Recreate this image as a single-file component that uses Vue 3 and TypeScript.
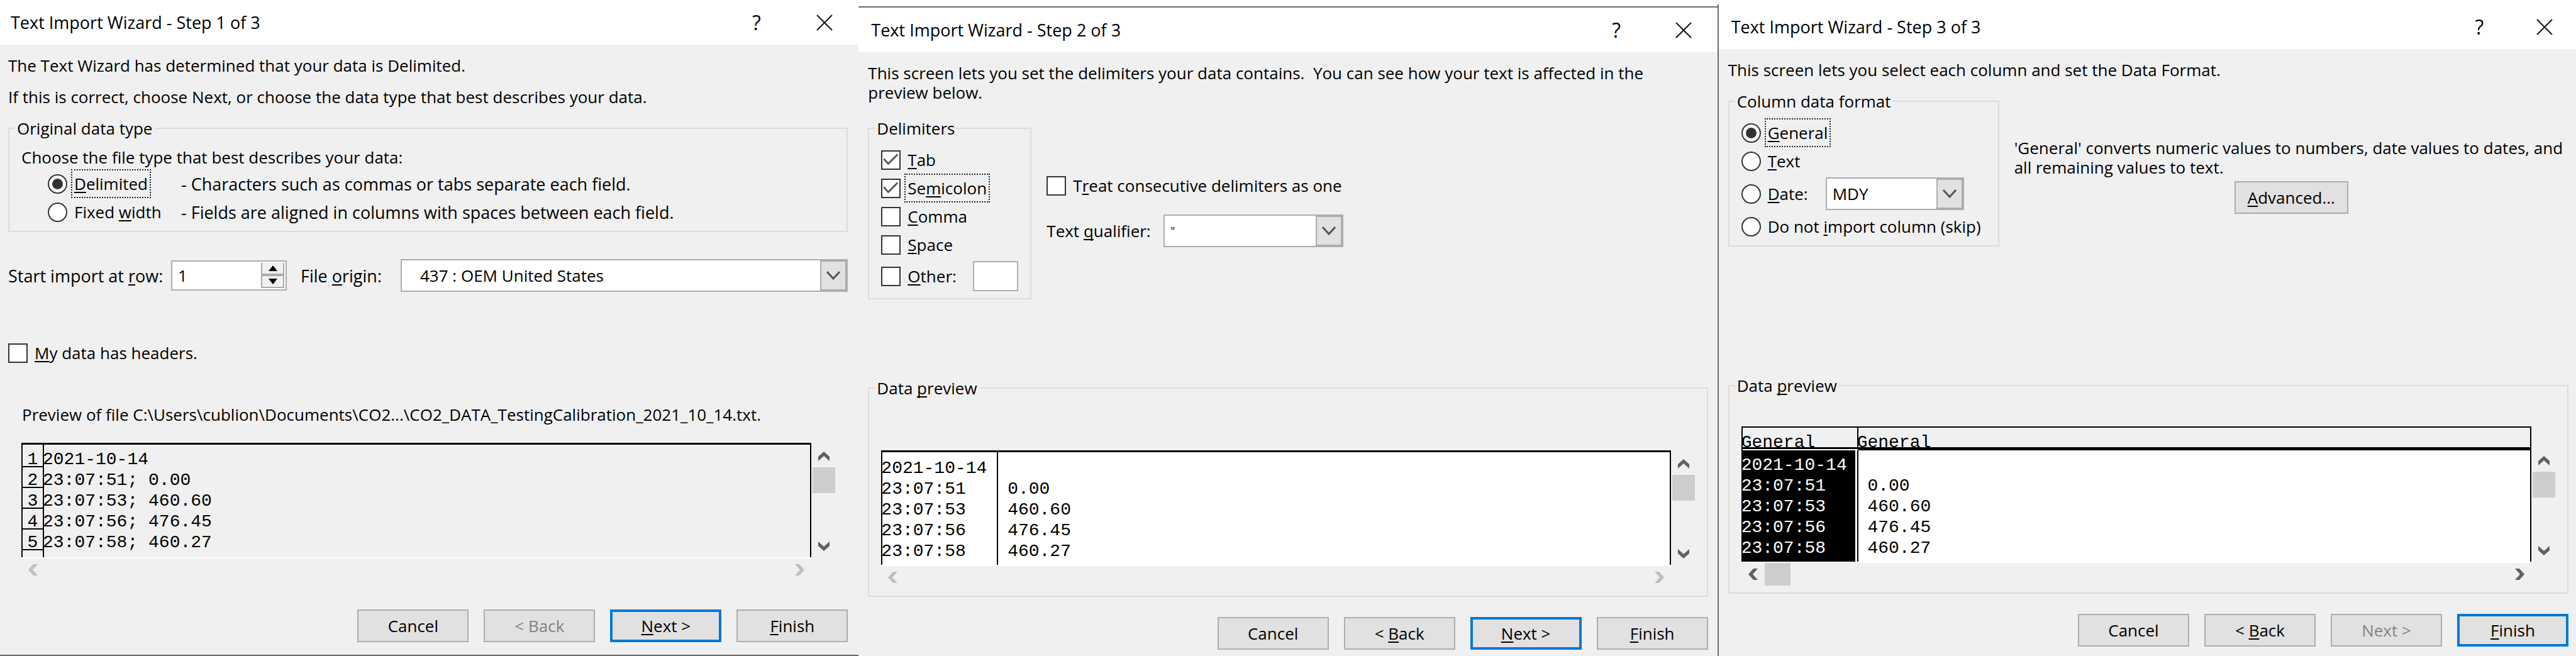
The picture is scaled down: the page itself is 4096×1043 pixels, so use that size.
<script setup lang="ts">
import { h, ref, type FunctionalComponent } from 'vue'

/* Text with an access key: the letter after "&" is underlined. */
const Caption: FunctionalComponent<{ text: string }> = ({ text }) => {
  const at = text.indexOf('&')
  if (at < 0) return h('span', { class: 'caption' }, text)
  return h('span', { class: 'caption' }, [text.slice(0, at), h('u', text[at + 1]), text.slice(at + 2)])
}
Caption.props = ['text']

interface Action {
  text: string
  primary?: boolean
  disabled?: boolean
}

const fileType = ref('delimited')
const startRow = ref('1')
const fileOrigin = ref('437')
const hasHeaders = ref(false)

const fileTypes = [
  { id: 'delimited', text: '&Delimited', note: '- Characters such as commas or tabs separate each field.' },
  { id: 'fixed', text: 'Fixed &width', note: '- Fields are aligned in columns with spaces between each field.' },
]

const delimiters = ref([
  { id: 'tab', text: '&Tab', on: true },
  { id: 'semicolon', text: 'Se&micolon', on: true },
  { id: 'comma', text: '&Comma', on: false },
  { id: 'space', text: '&Space', on: false },
])
const otherOn = ref(false)
const otherChar = ref('')
const mergeDelimiters = ref(false)
const qualifier = ref('"')

const columnFormat = ref('general')
const dateOrder = ref('MDY')

const lines = ['2021-10-14', '23:07:51; 0.00', '23:07:53; 460.60', '23:07:56; 476.45', '23:07:58; 460.27']
const rows = lines.map((line) => {
  const [time, value = ''] = line.split(';')
  return { time, value }
})

const actions: Record<number, Action[]> = {
  1: [{ text: 'Cancel' }, { text: '< Back', disabled: true }, { text: '&Next >', primary: true }, { text: '&Finish' }],
  2: [{ text: 'Cancel' }, { text: '< &Back' }, { text: '&Next >', primary: true }, { text: '&Finish' }],
  3: [{ text: 'Cancel' }, { text: '< &Back' }, { text: 'Next >', disabled: true }, { text: '&Finish', primary: true }],
}

/* Scroll bar arrow outlines. */
const up = '0,8 9,0 18,8 18,15 9,7 0,15'
const down = '0,0 9,8 18,0 18,7 9,15 0,7'
const left = '8,0 0,9 8,18 15,18 7,9 15,0'
const right = '0,0 8,9 0,18 7,18 15,9 7,0'
</script>

<template>
  <main class="desk">
    <section v-for="step in 3" :key="step" class="dialog" :class="`step-${step}`">
      <header class="titlebar">
        <h1>Text Import Wizard - Step {{ step }} of 3</h1>
        <button type="button" class="help" aria-label="Help">?</button>
        <button type="button" class="close" aria-label="Close">
          <svg width="26" height="26" viewBox="0 0 26 26"><path d="M1 1L25 25M25 1L1 25" fill="none" stroke="#111" stroke-width="2" /></svg>
        </button>
      </header>

      <div class="body">
        <template v-if="step === 1">
          <p>The Text Wizard has determined that your data is Delimited.</p>
          <p class="second">If this is correct, choose Next, or choose the data type that best describes your data.</p>

          <fieldset class="group">
            <legend>Original data type</legend>
            <div class="options">
              <p>Choose the file type that best describes your data:</p>
              <label v-for="t in fileTypes" :key="t.id" class="option indented">
                <input v-model="fileType" type="radio" name="file-type" :value="t.id" />
                <span class="name wide"><Caption :text="t.text" :class="{ focus: fileType === t.id }" /></span>
                <span class="note">{{ t.note }}</span>
              </label>
            </div>
          </fieldset>

          <div class="import-row">
            <label for="start-row"><Caption text="Start import at &row:" /></label>
            <div class="spin">
              <input id="start-row" v-model="startRow" type="text" />
              <span class="spin-buttons">
                <button type="button" aria-label="Increase"><svg width="14" height="9" viewBox="0 0 14 9"><path d="M0 9L7 0L14 9Z" /></svg></button>
                <button type="button" aria-label="Decrease"><svg width="14" height="9" viewBox="0 0 14 9"><path d="M0 0L7 9L14 0Z" /></svg></button>
              </span>
            </div>
            <label for="origin" class="origin-label"><Caption text="File &origin:" /></label>
            <div class="combo origin">
              <select id="origin" v-model="fileOrigin"><option value="437">437 : OEM United States</option></select>
              <span class="drop"><svg width="22" height="14" viewBox="0 0 22 14"><path d="M1 1L11 12L21 1" /></svg></span>
            </div>
          </div>

          <label class="option headers">
            <input v-model="hasHeaders" type="checkbox" />
            <span class="name"><Caption text="&My data has headers." /></span>
          </label>

          <p class="file-name">Preview of file C:\Users\cublion\Documents\CO2...\CO2_DATA_TestingCalibration_2021_10_14.txt.</p>
        </template>

        <template v-else-if="step === 2">
          <p>
            This screen lets you set the delimiters your data contains.&nbsp; You can see how your text is affected in the<br />
            preview below.
          </p>
          <div class="columns">
            <fieldset class="group delimiters">
              <legend>Delimiters</legend>
              <div class="options">
                <label v-for="d in delimiters" :key="d.id" class="option">
                  <input v-model="d.on" type="checkbox" />
                  <span class="name"><Caption :text="d.text" :class="{ focus: d.id === 'semicolon' }" /></span>
                </label>
                <div class="option">
                  <input id="other" v-model="otherOn" type="checkbox" />
                  <label for="other" class="name other-label"><Caption text="&Other:" /></label>
                  <input v-model="otherChar" type="text" class="other-char" aria-label="Other delimiter" />
                </div>
              </div>
            </fieldset>
            <div class="qualifiers">
              <label class="option">
                <input v-model="mergeDelimiters" type="checkbox" />
                <span class="name"><Caption text="T&reat consecutive delimiters as one" /></span>
              </label>
              <div class="qualifier-row">
                <label for="qualifier"><Caption text="Text &qualifier:" /></label>
                <div class="combo qualifier">
                  <select id="qualifier" v-model="qualifier"><option>"</option></select>
                  <span class="drop"><svg width="22" height="14" viewBox="0 0 22 14"><path d="M1 1L11 12L21 1" /></svg></span>
                </div>
              </div>
            </div>
          </div>
        </template>

        <template v-else>
          <p>This screen lets you select each column and set the Data Format.</p>
          <div class="columns">
            <fieldset class="group formats">
              <legend>Column data format</legend>
              <div class="options">
                <label class="option">
                  <input v-model="columnFormat" type="radio" name="format" value="general" />
                  <span class="name"><Caption text="&General" :class="{ focus: columnFormat === 'general' }" /></span>
                </label>
                <label class="option">
                  <input v-model="columnFormat" type="radio" name="format" value="text" />
                  <span class="name"><Caption text="&Text" /></span>
                </label>
                <div class="option">
                  <input id="date" v-model="columnFormat" type="radio" name="format" value="date" />
                  <label for="date" class="name date-label"><Caption text="&Date:" /></label>
                  <div class="combo date">
                    <select v-model="dateOrder" aria-label="Date order"><option>MDY</option></select>
                    <span class="drop"><svg width="22" height="14" viewBox="0 0 22 14"><path d="M1 1L11 12L21 1" /></svg></span>
                  </div>
                </div>
                <label class="option">
                  <input v-model="columnFormat" type="radio" name="format" value="skip" />
                  <span class="name"><Caption text="Do not &import column (skip)" /></span>
                </label>
              </div>
            </fieldset>
            <div class="explain">
              <p>
                'General' converts numeric values to numbers, date values to dates, and<br />
                all remaining values to text.
              </p>
              <button type="button" class="push advanced"><Caption text="&Advanced..." /></button>
            </div>
          </div>
        </template>

        <component :is="step === 1 ? 'div' : 'fieldset'" class="preview-group" :class="{ group: step > 1 }">
          <legend v-if="step > 1"><Caption text="Data &preview" /></legend>
          <div class="preview">
            <table>
              <thead v-if="step === 3">
                <tr><th class="first">General</th><th>General</th></tr>
              </thead>
              <tbody>
                <tr v-for="(row, i) in rows" :key="i">
                  <td class="first">{{ step === 1 ? i + 1 : row.time }}</td>
                  <td>{{ step === 1 ? lines[i] : row.value }}</td>
                </tr>
                <tr class="rest"><td class="first"></td><td></td></tr>
              </tbody>
            </table>
            <div class="vbar">
              <button type="button" aria-label="Scroll up"><svg width="18" height="15"><polygon :points="up" /></svg></button>
              <span class="thumb"></span>
              <button type="button" class="end" aria-label="Scroll down"><svg width="18" height="15"><polygon :points="down" /></svg></button>
            </div>
            <div class="hbar">
              <button type="button" :disabled="step < 3" aria-label="Scroll left"><svg width="15" height="18"><polygon :points="left" /></svg></button>
              <span v-if="step === 3" class="thumb"></span>
              <button type="button" class="end" :disabled="step < 3" aria-label="Scroll right"><svg width="15" height="18"><polygon :points="right" /></svg></button>
            </div>
          </div>
        </component>

        <footer>
          <button v-for="a in actions[step]" :key="a.text" type="button" class="push" :class="{ primary: a.primary }" :disabled="a.disabled">
            <Caption :text="a.text" />
          </button>
        </footer>
      </div>
    </section>
  </main>
</template>

<style>
body {
  margin: 0;
  background: #fff;
}

.caption {
  white-space: pre;
}

.caption u {
  text-decoration-thickness: 2px;
  text-underline-offset: 3px;
  text-decoration-skip-ink: none;
}

.caption.focus {
  outline: 2px dotted #222;
  outline-offset: 3px;
}
</style>

<style scoped>
.desk,
.desk * {
  box-sizing: border-box;
}

.desk {
  display: grid;
  grid-template-columns: repeat(3, minmax(0, 1fr));
  min-height: 100vh;
  color: #000;
  font: 26px/31px 'Open Sans', 'Noto Sans', sans-serif;
}

button,
input,
select {
  margin: 0;
  padding: 0;
  border: 0;
  color: inherit;
  font: inherit;
}

p {
  margin: 0;
}

/* Dialogs */
.dialog {
  display: flex;
  flex-direction: column;
  background: #f0f0f0;
}

.step-1 {
  --left: 13px;
  --right: 17px;
  --close: 109px;
  --title-left: 17px;
  --preview-gap: 29px;
  border-bottom: 2px solid #6b6b6b;
}

.step-2 {
  --left: 15px;
  --right: 15px;
  --close: 107px;
  --title-left: 20px;
  --preview-gap: 125px;
  margin-top: 10px;
  border-top: 2px solid #6b6b6b;
}

.step-3 {
  --left: 15px;
  --right: 12px;
  --close: 100px;
  --title-left: 20px;
  --preview-gap: 205px;
  margin-top: 7px;
  border-left: 2px solid #6b6b6b;
}

.titlebar {
  display: flex;
  align-items: center;
  height: 71px;
  padding-left: var(--title-left);
  background: #fff;
}

.titlebar h1 {
  flex: 1;
  margin: 0;
  font-size: 27px;
  font-weight: 400;
}

.titlebar button {
  display: flex;
  align-items: center;
  justify-content: center;
  width: 107px;
  height: 71px;
  background: none;
}

.titlebar .help {
  font-size: 32px;
}

.titlebar .close {
  width: var(--close);
}

.body {
  flex: 1;
  padding: 18px var(--right) 0 var(--left);
}

.second {
  margin-top: 19px;
}

/* Group boxes */
.group {
  min-width: 0;
  margin: 18px 0 0;
  padding: 15px 11px 11px 9px;
  border: 2px solid #dcdcdc;
}

.group legend {
  padding: 0 3px;
  line-height: 32px;
}

.columns {
  display: flex;
  gap: 24px;
  margin-top: 18px;
}

.step-2 .columns {
  margin-top: 25px;
}

.columns .group {
  flex: none;
  margin: 0;
}

.delimiters {
  width: 260px;
}

.formats {
  width: 431px;
}

.options {
  display: flex;
  flex-direction: column;
  gap: 7px;
  padding: 0 8px 0 10px;
}

.option {
  display: flex;
  align-items: center;
  gap: 6px;
  min-height: 38px;
  white-space: nowrap;
}

.indented {
  padding-left: 42px;
}

.name {
  padding-left: 5px;
}

.wide {
  width: 169px;
}

.note {
  font-size: 27px;
}

.other-label {
  width: 105px;
}

.date-label {
  width: 91px;
}

input[type='checkbox'],
input[type='radio'] {
  flex: none;
  width: 31px;
  height: 31px;
  border: 2px solid #333;
  background: #fff;
  appearance: none;
}

input[type='radio'] {
  display: grid;
  place-content: center;
  border-radius: 50%;
}

input[type='radio']:checked::before {
  width: 17px;
  height: 17px;
  border-radius: 50%;
  background: #333;
  content: '';
}

input[type='checkbox']:checked::before {
  display: block;
  width: 27px;
  height: 27px;
  background: #555;
  clip-path: polygon(1px 13px, 3px 11px, 9px 18px, 23px 4px, 25px 6px, 9px 22px);
  content: '';
}

.other-char {
  width: 72px;
  height: 48px;
  border: 2px solid #abadb3;
  background: #fff;
}

/* Combo boxes and the row spinner */
.combo {
  position: relative;
  height: 52px;
}

.combo select {
  width: 100%;
  height: 100%;
  padding: 0 46px 0 9px;
  border: 2px solid #abadb3;
  border-radius: 0;
  background: #fff;
  appearance: none;
}

.combo .drop {
  position: absolute;
  top: 0;
  right: 0;
  bottom: 0;
  display: flex;
  align-items: center;
  justify-content: center;
  width: 44px;
  border: solid #abadb0;
  border-width: 4px 4px 4px 2px;
  background: #e1e1e1;
  pointer-events: none;
}

.drop path {
  fill: none;
  stroke: #555;
  stroke-width: 3;
}

.origin {
  flex: 1;
}

.origin select {
  padding-left: 29px;
}

.qualifier {
  width: 286px;
}

.qualifier select {
  font-size: 18px;
}

.date {
  width: 220px;
}

.import-row {
  display: flex;
  align-items: center;
  margin-top: 43px;
}

.import-row > label {
  width: 259px;
  font-size: 27px;
}

.import-row > .origin-label {
  width: 181px;
  padding-left: 22px;
}

.spin {
  display: flex;
  width: 184px;
  height: 48px;
  padding: 2px;
  border: 2px solid #abadb3;
  background: #fff;
}

.spin input {
  flex: 1;
  min-width: 0;
  padding-left: 7px;
  background: none;
}

.spin-buttons {
  display: flex;
  flex-direction: column;
  gap: 4px;
  width: 37px;
  border: 2px solid #ababab;
  border-top: 0;
  background: #ababab;
}

.spin-buttons button {
  display: flex;
  flex: 1;
  align-items: center;
  justify-content: center;
  background: #f0f0f0;
}

.headers {
  margin-top: 78px;
}

.file-name {
  margin: 64px 0 0 22px;
  white-space: nowrap;
}

.qualifiers {
  padding-top: 88px;
}

.qualifier-row {
  display: flex;
  align-items: center;
  margin-top: 27px;
}

.qualifier-row label {
  width: 186px;
}

.explain {
  display: flex;
  flex: 1;
  flex-direction: column;
  align-items: center;
  gap: 6px;
  padding-top: 75px;
}

.explain p {
  width: 100%;
}

/* Data preview */
.preview-group {
  margin-top: var(--preview-gap);
  padding-bottom: 13px;
}

.preview-group.group {
  padding-bottom: 11px;
}

.step-2 .preview-group {
  padding-top: 83px;
}

.step-3 .preview-group {
  padding-top: 49px;
}

.preview {
  display: grid;
  grid-template-columns: minmax(0, 1fr) 36px;
  column-gap: 2px;
  margin: 0 8px 0 10px;
}

.step-1 .preview {
  margin: 0 20px 0 21px;
}

table {
  width: 100%;
  border: solid #000;
  border-width: 3px 2px 0;
  border-spacing: 0;
  table-layout: fixed;
  background: #fff;
  font: 28px/21px 'Liberation Mono', monospace;
  white-space: pre;
}

.step-1 table {
  background: none;
}

.step-3 table {
  border-top-width: 2px;
}

td,
th {
  height: 33px;
  padding: 0;
  text-align: left;
  text-indent: -2px;
  vertical-align: bottom;
}

.first {
  width: 184px;
  border-right: 2px solid #000;
}

tbody tr:first-child td {
  height: 36px;
}

tbody .rest td {
  height: 11px;
}

.step-1 td {
  border-bottom: 2px solid transparent;
}

.step-1 .first {
  width: 34px;
  border-bottom-color: #000;
  box-shadow: inset 1px 1px 0 #fff;
  text-align: center;
  text-indent: 0;
}

.step-1 .rest .first {
  border-bottom: 0;
}

th {
  height: 34px;
  border-bottom: 3px solid #000;
  background: #f0f0f0;
  box-shadow: inset 0 2px 0 #fff;
  font-weight: 400;
  line-height: 15px;
}

.step-3 td.first {
  background: #000;
  box-shadow: inset -3px 0 0 #fff;
  color: #fff;
}

.step-3 tbody tr:first-child td {
  border-top: 2px solid #000;
}

.step-3 tbody tr:first-child td.first {
  border-top-color: #fff;
}

.vbar {
  display: flex;
  flex-direction: column;
  padding-top: 3px;
}

.step-3 .vbar {
  padding-top: 36px;
}

.hbar {
  display: flex;
  border-top: 2px solid #fff;
}

.vbar button,
.hbar button {
  display: flex;
  align-items: center;
  justify-content: center;
  width: 37px;
  height: 36px;
  background: none;
  fill: #606060;
}

.vbar button {
  width: 36px;
}

.hbar button:disabled {
  fill: #bfbfbf;
}

.vbar .end {
  margin-top: auto;
}

.hbar .end {
  margin-left: auto;
}

.thumb {
  width: 41px;
  background: #cdcdcd;
}

.vbar .thumb {
  width: 36px;
  height: 41px;
}

/* Push buttons */
footer {
  display: flex;
  justify-content: flex-end;
  gap: 24px;
  margin-top: 32px;
}

.push {
  width: 177px;
  height: 52px;
  border: 2px solid #adadad;
  background: #e1e1e1;
}

.advanced {
  width: 181px;
}

.push.primary {
  border: 4px solid #0078d7;
}

.push:disabled {
  color: #838383;
}
</style>
